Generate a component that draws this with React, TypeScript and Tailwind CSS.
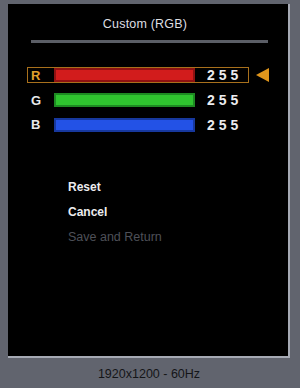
import React from "react";

const font = { fontFamily: '"Liberation Sans", Arial, sans-serif' };

function Row({ label, bar, border, selected }: { label: string; bar: string; border: string; selected?: boolean }) {
  return (
    <div className="flex items-center h-[24.7px]">
      <div
        className={
          "flex items-center w-[222px] h-[16px] " +
          (selected ? "border border-[#a8701c]" : "border border-transparent")
        }
      >
        <span
          className={
            "w-[26px] pl-[3px] text-[13px] font-bold leading-none " +
            (selected ? "text-[#e0a02c]" : "text-[#e8e8ea]")
          }
        >
          {label}
        </span>
        <div className={"w-[141px] h-[14px] border-2 " + bar + " " + border} />
        <span className="ml-[12px] text-[14px] font-bold leading-none text-[#ececee] tracking-[4px]">255</span>
      </div>
      <div className="ml-[7px] w-[13px] h-[14px] flex items-center">
        {selected && (
          <svg width="13" height="14" viewBox="0 0 13 14">
            <polygon points="0,7 13,0 13,14" fill="#e0961c" />
          </svg>
        )}
      </div>
    </div>
  );
}

export default function App() {
  return (
    <div className="w-[300px] h-[388px] bg-[#61646e] flex flex-col" style={font}>
      <div className="ml-[8px] mt-[4px] w-[282px] h-[354px] bg-black border-r-2 border-b-2 border-[#a6aab4] flex flex-col">
        <div className="mt-[12px] text-center text-[12.5px] text-[#dedee2] leading-[16px] tracking-[0.2px] pr-[6px]">
          Custom (RGB)
        </div>
        <div className="mt-[8px] ml-[23px] w-[237px] h-[3px] bg-[#5b5e66]" />
        <div className="mt-[20px] ml-[19px] flex flex-col">
          <Row label="R" bar="bg-[#d21c1c]" border="border-[#8e1212]" selected />
          <Row label="G" bar="bg-[#2fc42f]" border="border-[#1d8a22]" />
          <Row label="B" bar="bg-[#2352e6]" border="border-[#17389e]" />
        </div>
        <div className="mt-[38px] ml-[60px] flex flex-col text-[12px] leading-[25px] font-bold">
          <span className="text-[#ececee]">Reset</span>
          <span className="text-[#ececee]">Cancel</span>
          <span className="text-[#4e5058] font-normal text-[12.5px]">Save and Return</span>
        </div>
      </div>
      <div className="mt-[9px] text-center text-[12.5px] text-[#141518] leading-[14px] pr-[2px]">1920x1200 - 60Hz</div>
    </div>
  );
}
